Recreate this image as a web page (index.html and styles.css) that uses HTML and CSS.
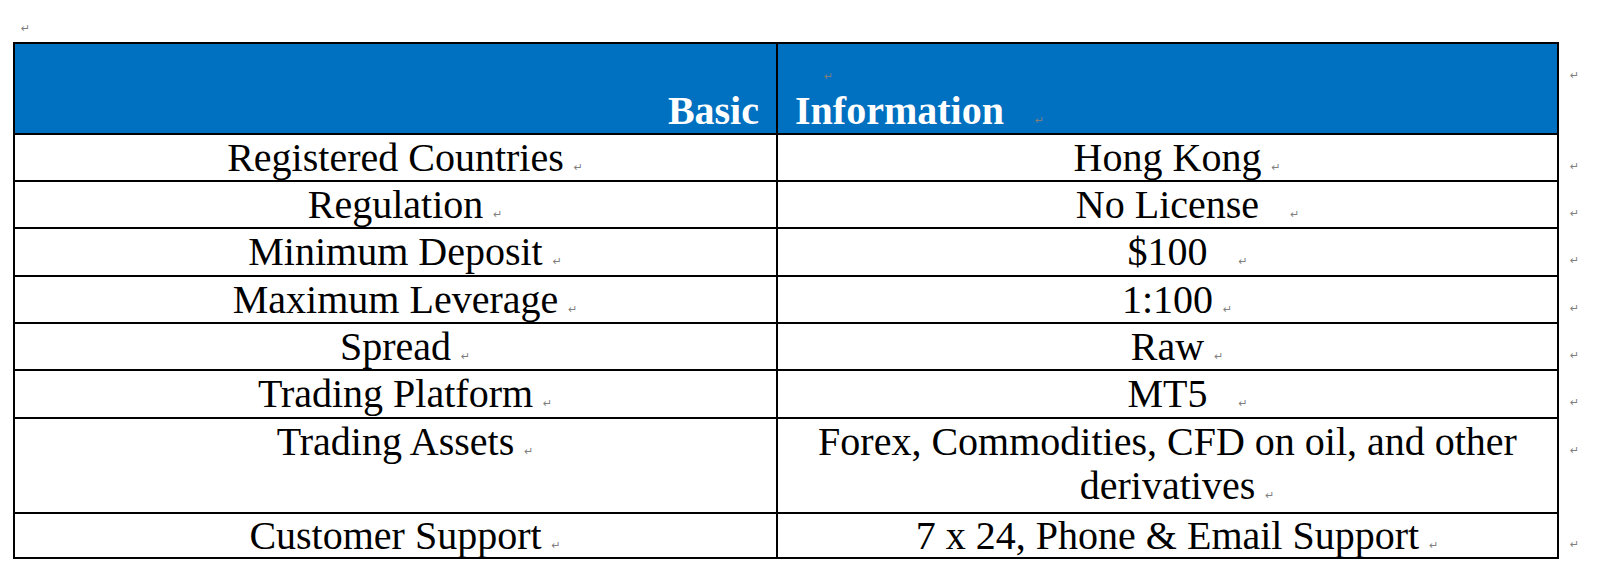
FILE: index.html
```html
<!DOCTYPE html>
<html>
<head>
<meta charset="utf-8">
<title>Basic Information</title>
<link rel="stylesheet" href="styles.css">
</head>
<body>
<div class="page">
  <div class="top-para"><span class="pmark">↵</span></div>
  <table class="info">
    <colgroup>
      <col class="c-label">
      <col class="c-value">
      <col class="c-end">
    </colgroup>
    <tr class="head">
      <th class="h-left">Basic</th>
      <th class="h-right">
        <div class="empty-par"><span class="pmark">↵</span></div>
        <div class="info-par">Information<span class="mark wide">↵</span></div>
      </th>
      <td class="end head-end"><span class="pmark">↵</span></td>
    </tr>
    <tr>
      <td>Registered Countries<span class="mark">↵</span></td>
      <td>Hong Kong<span class="mark">↵</span></td>
      <td class="end"><span class="pmark">↵</span></td>
    </tr>
    <tr>
      <td>Regulation<span class="mark">↵</span></td>
      <td>No License<span class="mark wide">↵</span></td>
      <td class="end"><span class="pmark">↵</span></td>
    </tr>
    <tr class="plus">
      <td>Minimum Deposit<span class="mark">↵</span></td>
      <td>$100<span class="mark wide">↵</span></td>
      <td class="end"><span class="pmark">↵</span></td>
    </tr>
    <tr>
      <td>Maximum Leverage<span class="mark">↵</span></td>
      <td>1:100<span class="mark">↵</span></td>
      <td class="end"><span class="pmark">↵</span></td>
    </tr>
    <tr>
      <td>Spread<span class="mark">↵</span></td>
      <td>Raw<span class="mark">↵</span></td>
      <td class="end"><span class="pmark">↵</span></td>
    </tr>
    <tr class="plus">
      <td>Trading Platform<span class="mark">↵</span></td>
      <td>MT5<span class="mark wide">↵</span></td>
      <td class="end"><span class="pmark">↵</span></td>
    </tr>
    <tr class="tall">
      <td>Trading Assets<span class="mark">↵</span></td>
      <td>Forex, Commodities, CFD on oil, and other derivatives<span class="mark">↵</span></td>
      <td class="end"><span class="pmark">↵</span></td>
    </tr>
    <tr class="last">
      <td>Customer Support<span class="mark">↵</span></td>
      <td>7 x 24, Phone &amp; Email Support<span class="mark">↵</span></td>
      <td class="end"><span class="pmark">↵</span></td>
    </tr>
  </table>
</div>
</body>
</html>
```

FILE: styles.css
```css
html, body {
  margin: 0;
  padding: 0;
  background: #ffffff;
}

body {
  font-family: "Liberation Serif", "Times New Roman", serif;
  color: #000000;
}

.page {
  padding-left: 13px;
}

.top-para {
  height: 42px;
  box-sizing: border-box;
  padding: 22px 0 0 8px;
  line-height: 10px;
}

.pmark,
.mark {
  font-family: "DejaVu Sans", sans-serif;
  font-size: 11px;
  line-height: 1;
  color: #7f7f7f;
  font-weight: normal;
}

.mark {
  display: inline-block;
  width: 0;
  white-space: nowrap;
  margin-left: 10px;
  margin-right: -10px;
}

.mark.wide {
  margin-left: 31px;
  margin-right: -31px;
}

.info {
  border-collapse: collapse;
  table-layout: fixed;
  width: 1590px;
}

.c-label { width: 763px; }
.c-value { width: 781px; }
.c-end { width: 46px; }

.info td,
.info th {
  border: 2px solid #000000;
  padding: 1px 6px 0;
  font-size: 40px;
  line-height: 44px;
  font-weight: normal;
  text-align: center;
  vertical-align: top;
  white-space: normal;
}

.info .end {
  border: none;
  text-align: left;
  padding: 1px 0 0 11px;
}

.head th {
  background: #0070c0;
  color: #ffffff;
  font-weight: bold;
  padding: 0;
}

.head .h-left {
  text-align: right;
  vertical-align: bottom;
  padding-right: 17px;
}

.head .h-right {
  text-align: left;
}

.empty-par {
  height: 45px;
  line-height: 45px;
  padding-left: 46px;
}

.info-par {
  line-height: 44px;
  padding-left: 17px;
}

.head .head-end {
  padding-top: 0;
  line-height: 45px;
}

.plus td {
  padding-bottom: 1px;
}

.tall td {
  padding-bottom: 4px;
}

.last td {
  padding-bottom: 0;
  line-height: 42px;
}
```
